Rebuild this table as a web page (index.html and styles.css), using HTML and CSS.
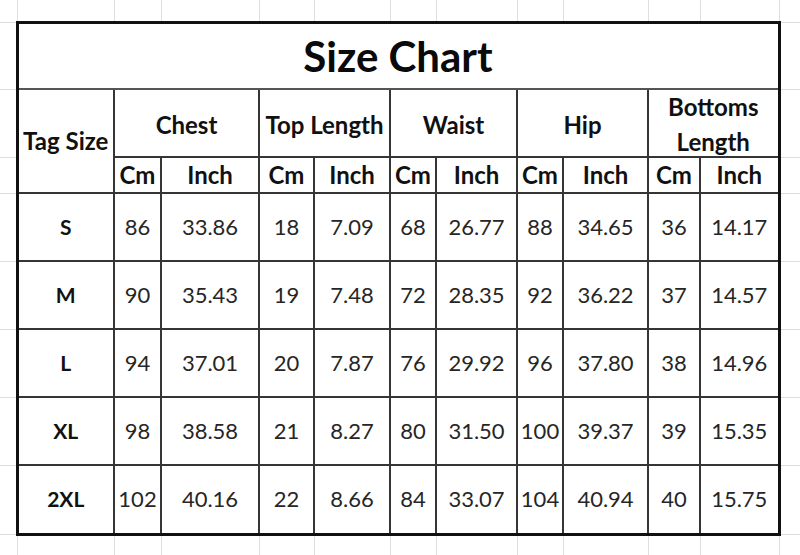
FILE: index.html
```html
<!DOCTYPE html>
<html>
<head>
<meta charset="utf-8">
<link rel="stylesheet" href="styles.css">
</head>
<body>
<table class="sheet">
  <colgroup>
    <col class="c-gap-l"><col class="c-tag">
    <col class="c1"><col class="c2"><col class="c3"><col class="c4">
    <col class="c5"><col class="c6"><col class="c7"><col class="c8">
    <col class="c9"><col class="c10"><col class="c-gap-r">
  </colgroup>
  <tr class="r-top">
    <td class="gap"></td><td class="gap"></td><td class="gap"></td><td class="gap"></td><td class="gap"></td><td class="gap"></td><td class="gap"></td><td class="gap"></td><td class="gap"></td><td class="gap"></td><td class="gap"></td><td class="gap"></td><td class="gap"></td>
  </tr>
  <tr class="r-title">
    <td class="gap"></td>
    <td class="title edge-l edge-t edge-r" colspan="11">Size Chart</td>
    <td class="gap"></td>
  </tr>
  <tr class="r-group">
    <td class="gap"></td>
    <td class="hd edge-l" rowspan="2">Tag Size</td>
    <td class="hd grp" colspan="2">Chest</td>
    <td class="hd grp" colspan="2">Top Length</td>
    <td class="hd grp" colspan="2">Waist</td>
    <td class="hd grp" colspan="2">Hip</td>
    <td class="hd edge-r" colspan="2"><span class="two">Bottoms<br>Length</span></td>
    <td class="gap"></td>
  </tr>
  <tr class="r-sub">
    <td class="gap"></td>
    <td class="hd">Cm</td><td class="hd">Inch</td>
    <td class="hd">Cm</td><td class="hd">Inch</td>
    <td class="hd">Cm</td><td class="hd">Inch</td>
    <td class="hd">Cm</td><td class="hd">Inch</td>
    <td class="hd">Cm</td><td class="hd edge-r">Inch</td>
    <td class="gap"></td>
  </tr>
  <tr class="r-data">
    <td class="gap"></td>
    <td class="tag edge-l">S</td>
    <td class="num">86</td><td class="num">33.86</td>
    <td class="num">18</td><td class="num">7.09</td>
    <td class="num">68</td><td class="num">26.77</td>
    <td class="num">88</td><td class="num">34.65</td>
    <td class="num">36</td><td class="num edge-r">14.17</td>
    <td class="gap"></td>
  </tr>
  <tr class="r-data">
    <td class="gap"></td>
    <td class="tag edge-l">M</td>
    <td class="num">90</td><td class="num">35.43</td>
    <td class="num">19</td><td class="num">7.48</td>
    <td class="num">72</td><td class="num">28.35</td>
    <td class="num">92</td><td class="num">36.22</td>
    <td class="num">37</td><td class="num edge-r">14.57</td>
    <td class="gap"></td>
  </tr>
  <tr class="r-data">
    <td class="gap"></td>
    <td class="tag edge-l">L</td>
    <td class="num">94</td><td class="num">37.01</td>
    <td class="num">20</td><td class="num">7.87</td>
    <td class="num">76</td><td class="num">29.92</td>
    <td class="num">96</td><td class="num">37.80</td>
    <td class="num">38</td><td class="num edge-r">14.96</td>
    <td class="gap"></td>
  </tr>
  <tr class="r-data">
    <td class="gap"></td>
    <td class="tag edge-l">XL</td>
    <td class="num">98</td><td class="num">38.58</td>
    <td class="num">21</td><td class="num">8.27</td>
    <td class="num">80</td><td class="num">31.50</td>
    <td class="num">100</td><td class="num">39.37</td>
    <td class="num">39</td><td class="num edge-r">15.35</td>
    <td class="gap"></td>
  </tr>
  <tr class="r-data r-last">
    <td class="gap"></td>
    <td class="tag edge-l edge-b">2XL</td>
    <td class="num edge-b">102</td><td class="num edge-b">40.16</td>
    <td class="num edge-b">22</td><td class="num edge-b">8.66</td>
    <td class="num edge-b">84</td><td class="num edge-b">33.07</td>
    <td class="num edge-b">104</td><td class="num edge-b">40.94</td>
    <td class="num edge-b">40</td><td class="num edge-b edge-r">15.75</td>
    <td class="gap"></td>
  </tr>
  <tr class="r-bottom">
    <td class="gap"></td><td class="gap"></td><td class="gap"></td><td class="gap"></td><td class="gap"></td><td class="gap"></td><td class="gap"></td><td class="gap"></td><td class="gap"></td><td class="gap"></td><td class="gap"></td><td class="gap"></td><td class="gap"></td>
  </tr>
</table>
</body>
</html>
```

FILE: styles.css
```css
html, body {
  margin: 0;
  padding: 0;
  background: #ffffff;
  width: 800px;
  height: 555px;
  overflow: hidden;
}

.sheet {
  border-collapse: collapse;
  table-layout: fixed;
  width: 800px;
  border-style: hidden;
  font-family: Lato, "Liberation Sans", sans-serif;
}

.c-gap-l { width: 17px; }
.c-tag { width: 97px; }
.c1 { width: 47px; }
.c2 { width: 98px; }
.c3 { width: 55px; }
.c4 { width: 76px; }
.c5 { width: 46px; }
.c6 { width: 81px; }
.c7 { width: 46px; }
.c8 { width: 85px; }
.c9 { width: 52px; }
.c10 { width: 79px; }
.c-gap-r { width: 21px; }

.r-top { height: 22px; }
.r-title { height: 67px; }
.r-group { height: 68px; }
.r-sub { height: 36px; }
.r-data { height: 68px; }
.r-last { height: 69px; }
.r-bottom { height: 22px; }

td {
  padding: 0;
  text-align: center;
  vertical-align: middle;
  white-space: nowrap;
  overflow: hidden;
}

.gap {
  border: 1px solid #dedede;
}

.title, .hd, .tag, .num {
  border: 2px solid #353535;
}

.edge-l { border-left: 3px solid #111111; }
.edge-r { border-right: 3px solid #111111; }
.edge-t { border-top: 3px solid #111111; }
.edge-b { border-bottom: 3px solid #111111; }

.title {
  font-size: 42px;
  font-weight: 700;
  color: #0a0a0a;
  line-height: 50px;
  border-bottom-color: #555555;
}

.hd {
  font-size: 24px;
  font-weight: 700;
  color: #111111;
  line-height: 30px;
}

.grp {
  padding-top: 4px;
}

.two {
  display: block;
  line-height: 35px;
  margin: -2px 0 -4px;
}

.tag {
  font-size: 21px;
  font-weight: 700;
  color: #111111;
  line-height: 30px;
}

.num {
  font-size: 22px;
  font-weight: 400;
  color: #262626;
  line-height: 30px;
}
```
